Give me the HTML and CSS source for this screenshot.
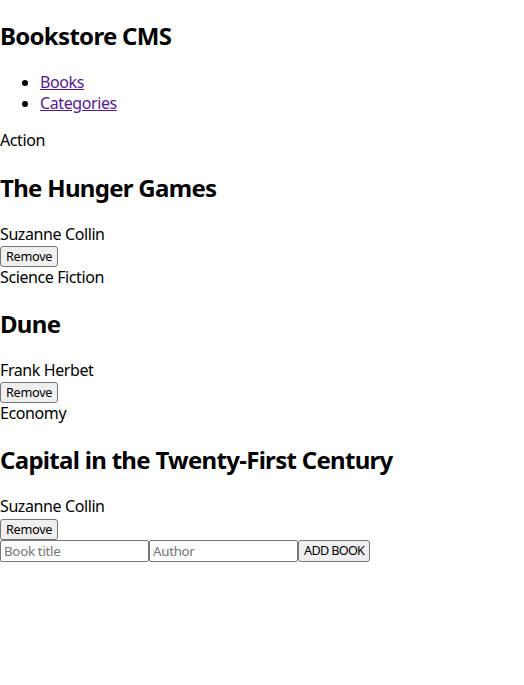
FILE: index.html
```html
<!DOCTYPE html>
<html lang="en">
<head>
<meta charset="utf-8">
<title>Bookstore CMS</title>
<link rel="stylesheet" href="styles.css">
</head>
<body>
<header class="header">
  <h2 class="title">Bookstore CMS</h2>
  <ul class="nav">
    <li><a class="nav-link" href="#">Books</a></li>
    <li><a class="nav-link" href="#">Categories</a></li>
  </ul>
</header>
<main>
  <div class="book">
    <div class="category">Action</div>
    <h2 class="book-title">The Hunger Games</h2>
    <div class="author">Suzanne Collin</div>
    <button class="btn" type="button">Remove</button>
  </div>
  <div class="book">
    <div class="category">Science Fiction</div>
    <h2 class="book-title">Dune</h2>
    <div class="author">Frank Herbet</div>
    <button class="btn" type="button">Remove</button>
  </div>
  <div class="book">
    <div class="category">Economy</div>
    <h2 class="book-title">Capital in the Twenty-First Century</h2>
    <div class="author">Suzanne Collin</div>
    <button class="btn" type="button">Remove</button>
  </div>
  <form class="add-form">
    <input class="field" type="text" placeholder="Book title"><input class="field" type="text" placeholder="Author"><button class="btn btn-add" type="button">ADD BOOK</button>
  </form>
</main>
</body>
</html>
```
FILE: styles.css
```css
body {
  margin: 0;
  font-family: "Noto Sans", "Open Sans", sans-serif;
  font-size: 16px;
  line-height: 21.3px;
  letter-spacing: -0.4px;
  color: #000;
  background: #fff;
}

.title,
.book-title {
  font-size: 24px;
  line-height: 32px;
  font-weight: 700;
  letter-spacing: -0.7px;
  margin: 19.92px 0;
}

.nav {
  margin: 16px 0;
  padding-left: 40px;
}

.nav-link {
  color: #551a8b;
}

.btn {
  font-family: "Noto Sans", "Open Sans", sans-serif;
  font-size: 12.7px;
  line-height: 17px;
  letter-spacing: -0.3px;
  padding: 1px 5px;
  margin: 0;
  color: #000;
  background: #efefef;
  border: 1px solid #767676;
  border-radius: 3px;
}

.btn-add {
  letter-spacing: -0.7px;
}

.add-form {
  display: flex;
  align-items: stretch;
}

.field {
  width: 149px;
  box-sizing: border-box;
  font-family: "Noto Sans", "Open Sans", sans-serif;
  font-size: 13.33px;
  line-height: 18px;
  letter-spacing: -0.3px;
  padding: 1px 3px;
  margin: 0;
  border: 1px solid #767676;
  border-radius: 2px;
}

.field::placeholder {
  color: #757575;
}
```
